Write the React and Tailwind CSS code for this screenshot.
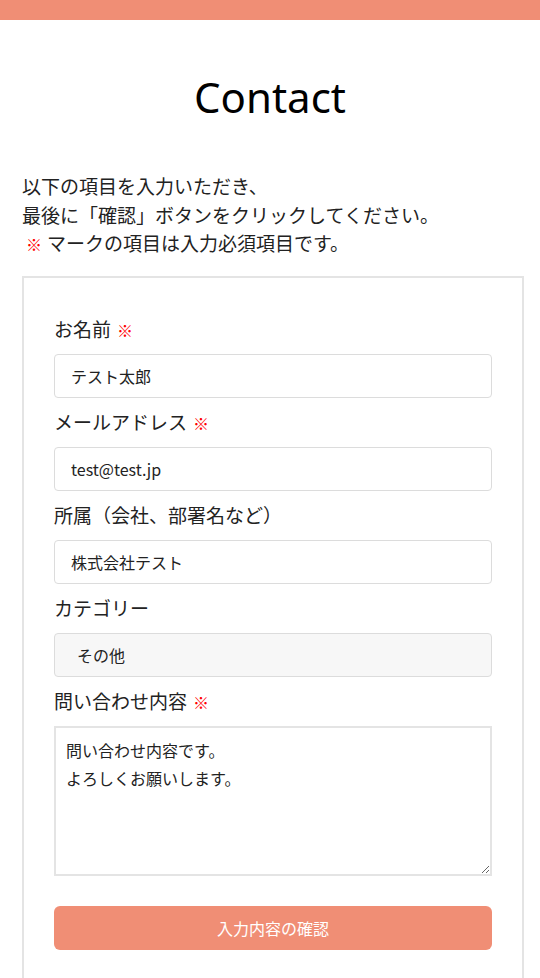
const jp = { fontFamily: '"Noto Sans CJK JP", "Noto Sans", sans-serif' };

const Required = () => <span className="text-[#ff0000] text-[16px] leading-none ml-[6px]">※</span>;

const Field = ({ label, required, children }) => (
  <div className="mt-[10px] first:mt-0">
    <div className="text-[19px] leading-7 mb-[11px] text-[#222]">
      {label}
      {required && <Required />}
    </div>
    {children}
  </div>
);

const inputCls =
  "block w-full h-[44px] rounded-[4px] border border-[#dcdcdc] px-4 text-[16px] text-[#222] bg-white outline-none";

export default function App() {
  return (
    <div className="min-h-[978px] bg-white text-[#222] [text-spacing-trim:space-all]" style={jp}>
      <div className="h-[20px] bg-[#f08e75]" />

      <h1
        className="text-center text-[42px] leading-none mt-[56px] text-black"
        style={{ fontFamily: '"Noto Sans", sans-serif' }}
      >
        Contact
      </h1>

      <div className="px-[22px] mt-[54px] text-[19px] leading-[28.6px]">
        <p>以下の項目を入力いただき、</p>
        <p>
          最後に<span className="inline-block w-[1em] text-right">「</span>確認
          <span className="inline-block w-[1em] text-left">」</span>ボタンをクリックしてください。
        </p>
        <p>
          <span className="text-[#ff0000] text-[16px] leading-none ml-[4px] mr-[5px]">※</span>マークの項目は入力必須項目です。
        </p>
      </div>

      <div className="ml-[22px] w-[502px] mt-[18px] border-2 border-[#e4e4e4] px-[30px] pt-[37px] pb-[40px]">
        <Field label="お名前" required>
          <input className={inputCls} defaultValue="テスト太郎" style={jp} />
        </Field>
        <Field label="メールアドレス" required>
          <input className={inputCls} defaultValue="test@test.jp" style={jp} />
        </Field>
        <Field label="所属（会社、部署名など）">
          <input className={inputCls} defaultValue="株式会社テスト" style={jp} />
        </Field>
        <Field label="カテゴリー">
          <div className="flex items-center w-full h-[44px] rounded-[4px] border border-[#dcdcdc] bg-[#f7f7f7] pl-[22px] text-[16px]">
            その他
          </div>
        </Field>
        <Field label="問い合わせ内容" required>
          <textarea
            className="block w-full h-[150px] border-2 border-[#e4e4e4] px-[10px] py-[8px] text-[16px] leading-7 text-[#222] outline-none"
            style={jp}
            defaultValue={"問い合わせ内容です。\nよろしくお願いします。"}
          />
        </Field>

        <button
          className="mt-[30px] w-full h-[44px] rounded-[6px] bg-[#f08e75] text-white text-[16px]"
          style={jp}
        >
          入力内容の確認
        </button>
      </div>
    </div>
  );
}
